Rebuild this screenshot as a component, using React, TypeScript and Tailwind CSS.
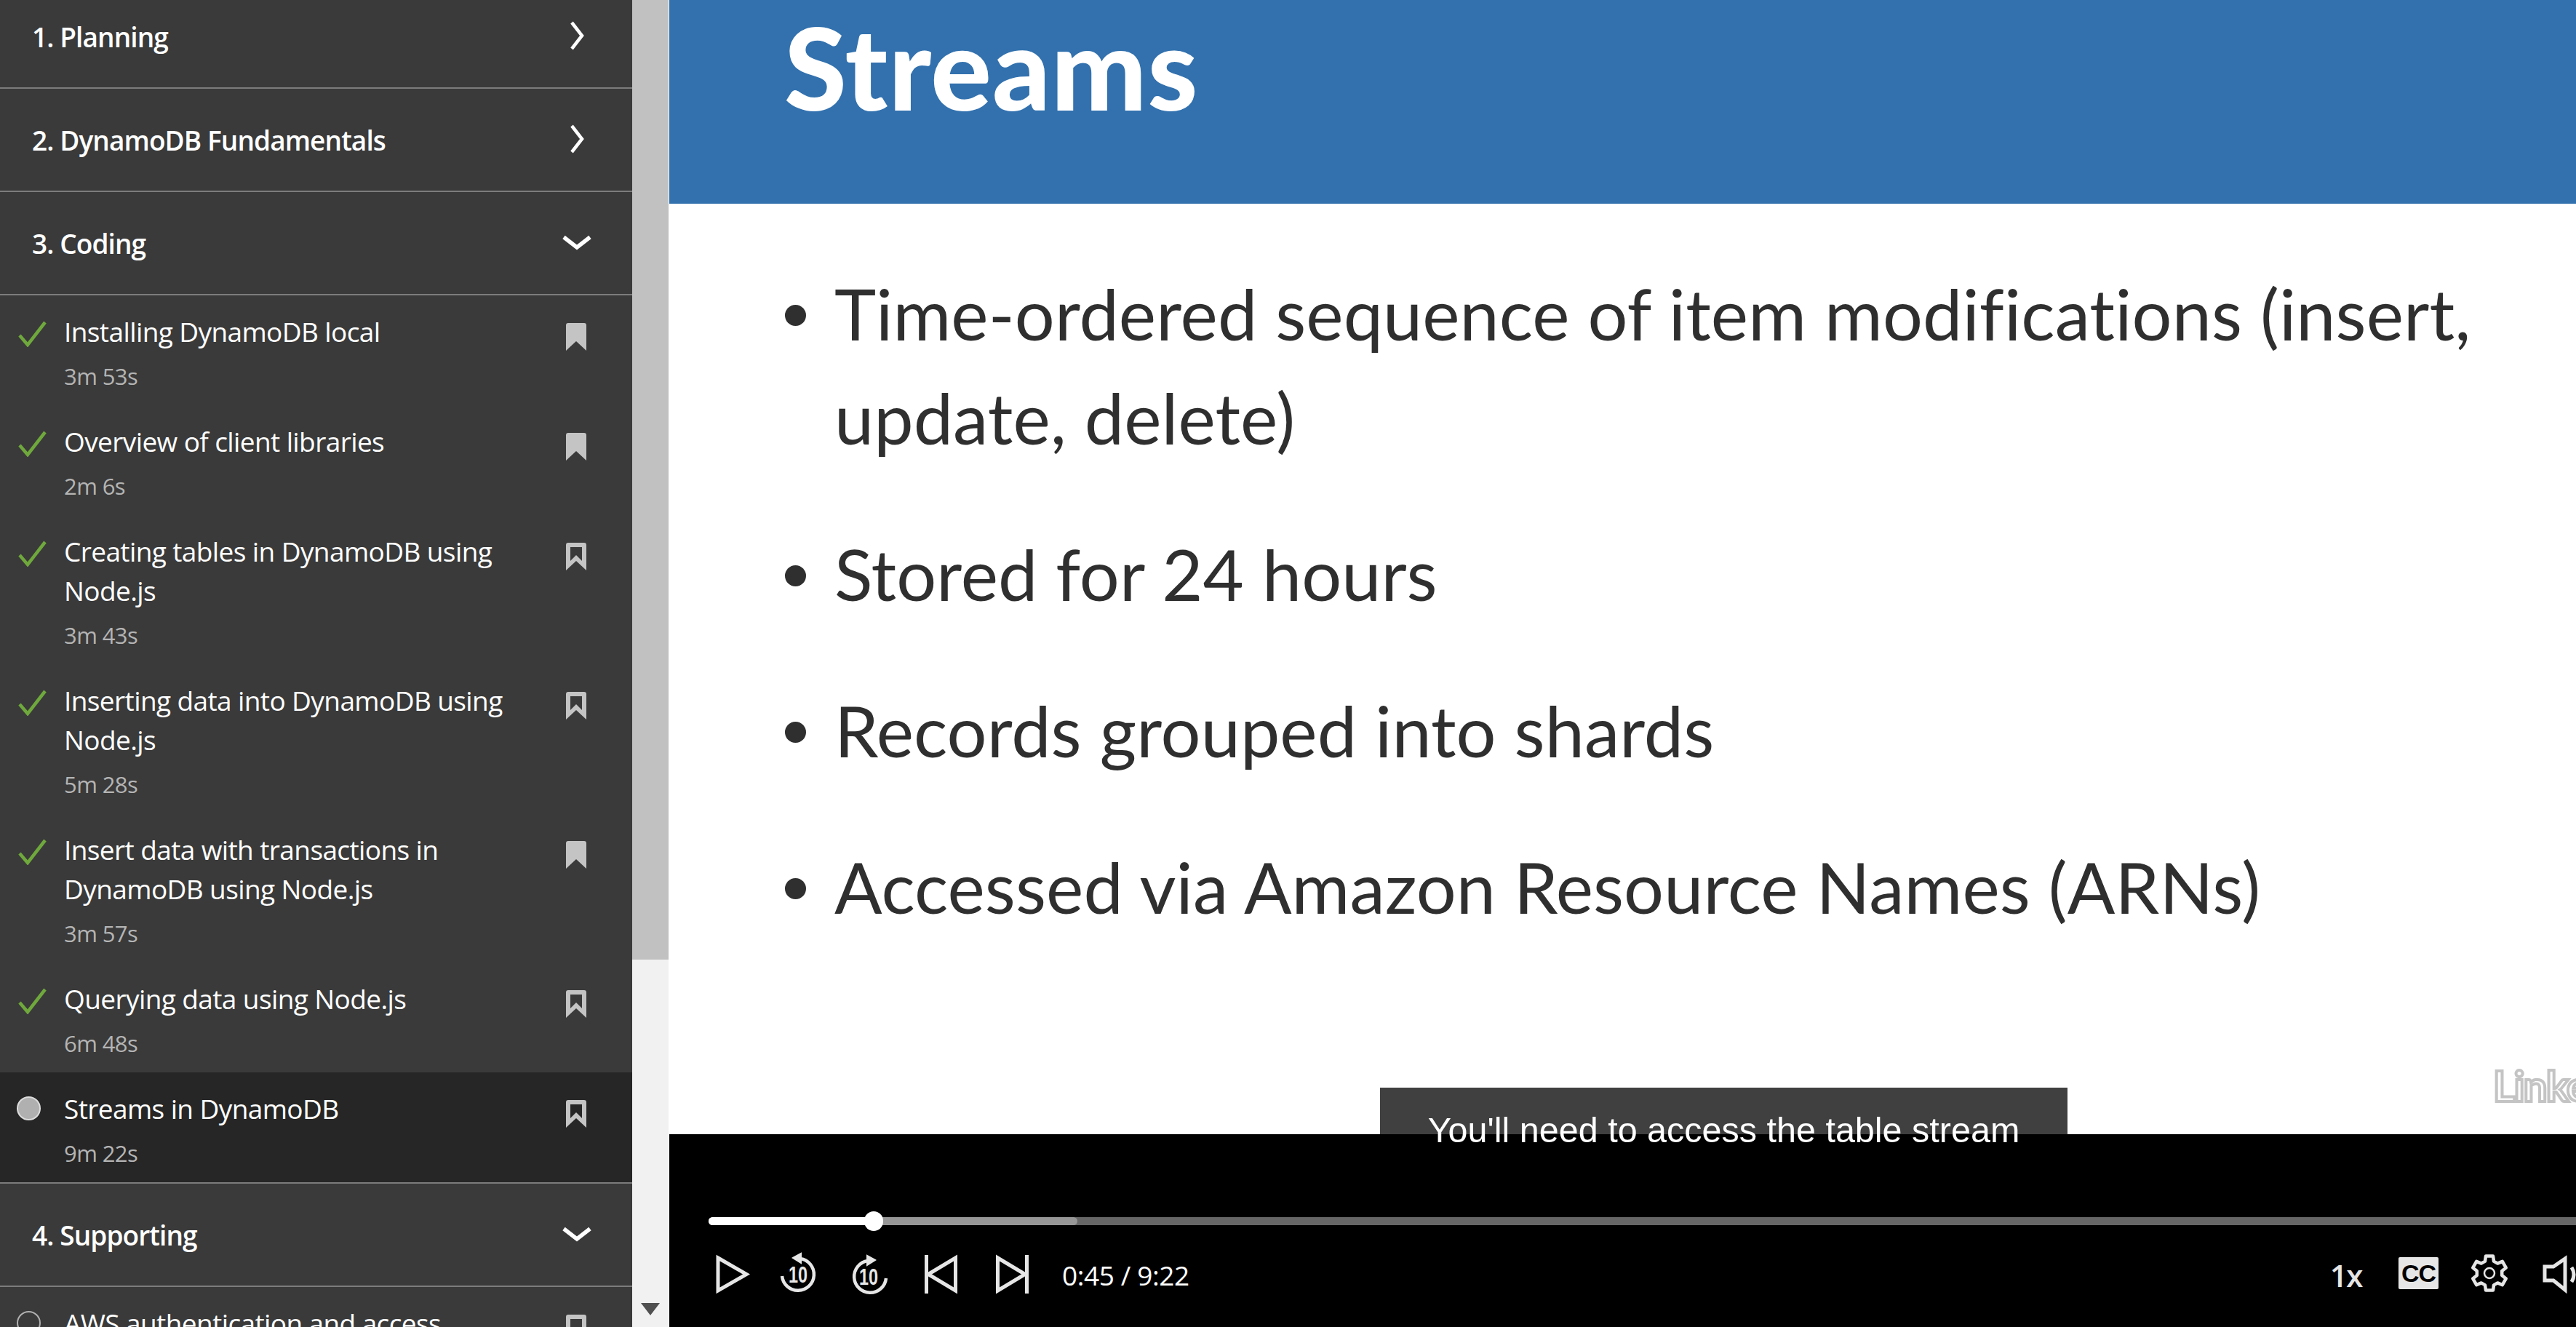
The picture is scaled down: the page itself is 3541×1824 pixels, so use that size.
import React from "react";

type Item = { title: string; dur: string; status: "done" | "active" | "none"; filled?: boolean };

const items: Item[] = [
  { title: "Installing DynamoDB local", dur: "3m 53s", status: "done", filled: true },
  { title: "Overview of client libraries", dur: "2m 6s", status: "done", filled: true },
  { title: "Creating tables in DynamoDB using Node.js", dur: "3m 43s", status: "done" },
  { title: "Inserting data into DynamoDB using Node.js", dur: "5m 28s", status: "done" },
  { title: "Insert data with transactions in DynamoDB using Node.js", dur: "3m 57s", status: "done", filled: true },
  { title: "Querying data using Node.js", dur: "6m 48s", status: "done" },
  { title: "Streams in DynamoDB", dur: "9m 22s", status: "active" },
];

function ChevronRight() {
  return (
    <svg width="24" height="42" viewBox="0 0 24 42" fill="none" stroke="#ffffff" strokeWidth="4.5">
      <path d="M5 3 L19 21 L5 39" />
    </svg>
  );
}

function ChevronDown() {
  return (
    <svg width="44" height="24" viewBox="0 0 44 24" fill="none" stroke="#ffffff" strokeWidth="5.5">
      <path d="M4 4 L22 18 L40 4" />
    </svg>
  );
}

function Check() {
  return (
    <svg width="40" height="36" viewBox="0 0 40 36" fill="none" stroke="#6fa83c" strokeWidth="4.5">
      <path d="M2 20 L13 33 L37 2" />
    </svg>
  );
}

function Bookmark({ filled }: { filled?: boolean }) {
  return (
    <svg width="28" height="38" viewBox="0 0 28 38">
      {filled ? (
        <path d="M0 3 Q0 0 3 0 L25 0 Q28 0 28 3 L28 38 L14 25 L0 38 Z" fill="#c4c4c4" />
      ) : (
        <path d="M0 3 Q0 0 3 0 L25 0 Q28 0 28 3 L28 38 L14 25 L0 38 Z M6 6 L6 25 L14 17 L22 25 L22 6 Z" fill="#c4c4c4" fillRule="evenodd" />
      )}
    </svg>
  );
}

function Header({ label, open, first }: { label: string; open?: boolean; first?: boolean }) {
  return (
    <div className={`flex h-[142px] shrink-0 items-center justify-between border-b-2 border-[#7c7c7c] pl-[44px] pr-[54px] ${first ? "-mt-[20px]" : ""}`}>
      <span className="mt-[2px] text-[37px] font-semibold tracking-[-0.9px] text-white">{label}</span>
      <span className={`flex w-[44px] justify-center ${open ? "mt-0" : "-mt-[2px]"}`}>{open ? <ChevronDown /> : <ChevronRight />}</span>
    </div>
  );
}

function Row({ item }: { item: Item }) {
  return (
    <div className={`flex shrink-0 pb-[13px] pt-[23px] ${item.status === "active" ? "bg-[#262626]" : ""}`}>
      <div className="flex w-[88px] shrink-0 justify-start pl-[25px] pt-[12px]">
        {item.status === "done" && <Check />}
        {item.status === "active" && <span className="-ml-[2px] mt-[-2px] block h-[33px] w-[33px] rounded-full border-2 border-[#dcdcdc] bg-[#b0b0b0]" />}
        {item.status === "none" && <span className="-ml-[2px] mt-[-2px] block h-[33px] w-[33px] rounded-full border-2 border-[#b0b0b0]" />}
      </div>
      <div className="w-[690px] shrink-0 pr-[30px]">
        <div className="text-[37px] leading-[54px] tracking-[-0.6px] text-white">{item.title}</div>
        <div className="mt-[7px] text-[31px] leading-[54px] tracking-[-0.6px] text-[#b4b4b4]">{item.dur}</div>
      </div>
      <div className="pt-[15px]">
        <Bookmark filled={item.filled} />
      </div>
    </div>
  );
}

function Sidebar() {
  return (
    <aside className="flex h-full w-[869px] shrink-0 flex-col overflow-hidden bg-[#3a3a3a] font-['Open_Sans',sans-serif]">
      <Header label="1. Planning" first />
      <Header label="2. DynamoDB Fundamentals" />
      <Header label="3. Coding" open />
      {items.map((it) => (
        <Row key={it.title} item={it} />
      ))}
      <div className="border-b-2 border-[#7c7c7c]" />
      <Header label="4. Supporting" open />
      <Row item={{ title: "AWS authentication and access", dur: "4m 10s", status: "none" }} />
    </aside>
  );
}

function Scrollbar() {
  return (
    <div className="flex h-full w-[51px] shrink-0 flex-col border-r border-white bg-[#f1f1f1]">
      <div className="h-[1319px] bg-[#c1c1c1]" />
      <div className="mt-auto mb-[16px] flex justify-center">
        <svg width="26" height="17" viewBox="0 0 26 17">
          <path d="M0 0 L26 0 L13 17 Z" fill="#505050" />
        </svg>
      </div>
    </div>
  );
}

const bullets = [
  "Time-ordered sequence of item modifications (insert, update, delete)",
  "Stored for 24 hours",
  "Records grouped into shards",
  "Accessed via Amazon Resource Names (ARNs)",
];

function Slide() {
  return (
    <section className="relative z-10 h-[1559px] shrink-0 bg-white font-['Lato',sans-serif]">
      <div className="h-[280px] bg-[#3271ae] pl-[158px] pt-[14px]">
        <h1 className="text-[156px] font-black leading-[156px] tracking-[1px] text-white">Streams</h1>
      </div>
      <ul className="flex flex-col gap-[72px] pl-[159px] pt-[79px]">
        {bullets.map((b) => (
          <li key={b} className="flex items-start">
            <span className="mt-[60px] block h-[29px] w-[29px] shrink-0 rounded-full bg-[#2f2f2f]" />
            <span className="ml-[39px] w-[2300px] text-[97px] font-normal leading-[143px] tracking-[0.1px] text-[#2f2f2f]">{b}</span>
          </li>
        ))}
      </ul>
      <div className="absolute left-[2507px] top-[1460px] whitespace-nowrap text-[58px] font-bold leading-[64px] tracking-[-1.5px] text-white [-webkit-text-stroke:4px_#c4c4c4]">
        Linked
      </div>
      <div className="absolute left-[977px] top-[1495px] flex h-[64px] w-[945px] justify-center bg-[#404040]">
        <span className="mt-[30px] whitespace-nowrap font-['Liberation_Sans',sans-serif] text-[48.5px] leading-[56px] text-white">You'll need to access the table stream</span>
      </div>
    </section>
  );
}

function PlayIcon() {
  return (
    <svg width="55" height="60" viewBox="0 0 55 60" fill="none" stroke="#e6e6e6" strokeWidth="5">
      <path d="M7 9 L46 31.5 L7 54 Z" />
    </svg>
  );
}

function SkipTen({ forward }: { forward?: boolean }) {
  return (
    <svg width="55" height="60" viewBox="0 0 55 60">
      <g transform={forward ? "translate(55 3) scale(-1 1)" : undefined}>
        <path d="M30 10 A22 22 0 1 1 5 34" fill="none" stroke="#e6e6e6" strokeWidth="4.5" />
        <path d="M20 9 L31 3 L31 16 Z" fill="#e6e6e6" stroke="#e6e6e6" strokeWidth="2" />
      </g>
      <text
        x={forward ? 26 : 27}
        y={forward ? 46 : 43}
        textAnchor="middle"
        textLength={26}
        lengthAdjust="spacingAndGlyphs"
        fontFamily="Liberation Sans"
        fontWeight="700"
        fontSize="31"
        fill="#e6e6e6"
      >
        10
      </text>
    </svg>
  );
}

function PrevIcon() {
  return (
    <svg width="52" height="60" viewBox="0 0 52 60" fill="none" stroke="#e6e6e6" strokeWidth="5">
      <path d="M5.5 5 L5.5 58" />
      <path d="M8 31.5 L45.5 9 L45.5 54 Z" />
    </svg>
  );
}

function NextIcon() {
  return (
    <svg width="52" height="60" viewBox="0 0 52 60" fill="none" stroke="#e6e6e6" strokeWidth="5">
      <path d="M46.5 5 L46.5 58" />
      <path d="M44 31.5 L6.5 9 L6.5 54 Z" />
    </svg>
  );
}

function gearPath() {
  const cx = 26;
  const cy = 27;
  const pts: string[] = [];
  for (let k = 0; k < 6; k++) {
    const a = -90 + k * 60;
    const add = (deg: number, r: number) => {
      const t = ((a + deg) * Math.PI) / 180;
      pts.push(`${(cx + r * Math.cos(t)).toFixed(1)} ${(cy + r * Math.sin(t)).toFixed(1)}`);
    };
    add(-12, 24);
    add(12, 24);
    add(20, 17.5);
    add(40, 17.5);
  }
  return "M" + pts.join(" L") + " Z";
}

function GearIcon() {
  return (
    <svg width="52" height="54" viewBox="0 0 52 54" fill="none" stroke="#e6e6e6">
      <path d={gearPath()} strokeWidth="4.5" strokeLinejoin="round" />
      <circle cx="26" cy="27" r="7" strokeWidth="2.5" />
    </svg>
  );
}

function VolumeIcon() {
  return (
    <svg width="49" height="60" viewBox="0 0 49 60" fill="none" stroke="#e6e6e6" strokeWidth="5">
      <path d="M6 21 L18 21 L34 10 L34 53 L18 40 L6 40 Z" />
      <path d="M43 22 Q49 32 43 42" />
    </svg>
  );
}

function Controls() {
  return (
    <section className="relative h-[265px] shrink-0 bg-black pt-[114px] font-['Open_Sans',sans-serif]">
      <div className="relative ml-[54px] h-[11px] rounded-l-full bg-[#666666]">
        <div className="absolute left-0 top-0 h-[11px] w-[507px] rounded-full bg-[#969696]" />
        <div className="absolute left-0 top-0 h-[11px] w-[227px] rounded-l-full bg-white" />
        <div className="absolute left-[214px] top-[-8px] h-[27px] w-[26px] rounded-full bg-white" />
      </div>
      <div className="mt-[36px] flex h-[60px] items-center justify-between pl-[60px]">
        <div className="flex items-center">
          <PlayIcon />
          <div className="ml-[35px]">
            <SkipTen />
          </div>
          <div className="ml-[43px]">
            <SkipTen forward />
          </div>
          <div className="ml-[45px]">
            <PrevIcon />
          </div>
          <div className="ml-[45px]">
            <NextIcon />
          </div>
          <span className="ml-[43px] mt-[5px] text-[37px] tracking-[-0.4px] text-white">0:45 / 9:22</span>
        </div>
        <div className="flex items-center">
          <span className="mr-[50px] mt-[4px] text-[42px] font-semibold tracking-[-1.5px] text-[#e6e6e6]">1x</span>
          <span className="mr-[44px] flex h-[44px] w-[55px] items-center justify-center rounded-[2px] bg-[#e6e6e6] font-['Liberation_Sans',sans-serif] text-[34px] font-bold tracking-[-1px] text-black">CC</span>
          <span className="mr-[44px] flex">
            <GearIcon />
          </span>
          <span className="flex">
            <VolumeIcon />
          </span>
        </div>
      </div>
    </section>
  );
}

export default function App() {
  return (
    <div className="flex h-[1824px] w-[3541px] overflow-hidden bg-white">
      <Sidebar />
      <Scrollbar />
      <main className="flex h-full min-w-0 flex-1 flex-col">
        <Slide />
        <Controls />
      </main>
    </div>
  );
}
